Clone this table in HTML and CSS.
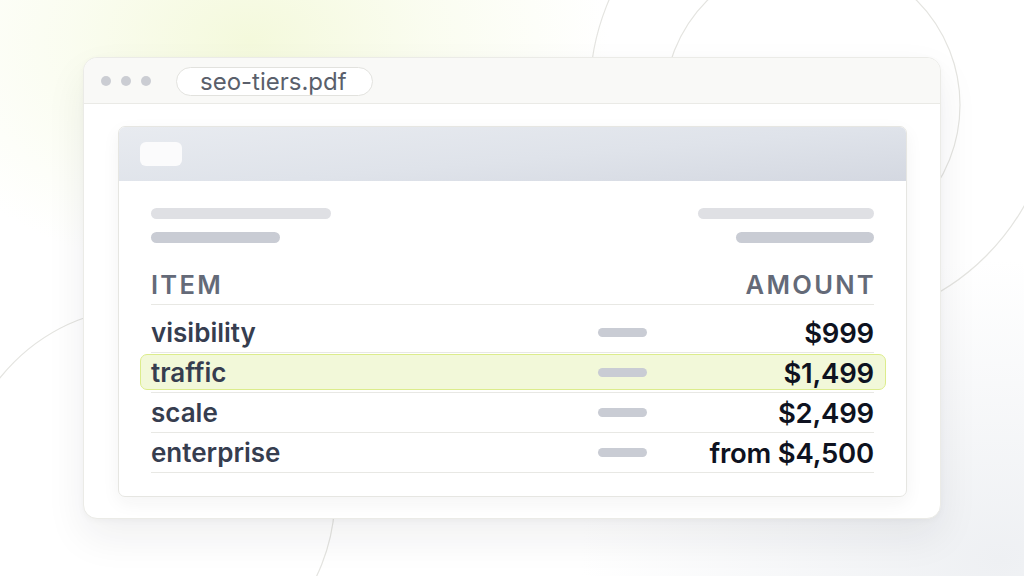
FILE: index.html
```html
<!DOCTYPE html>
<html lang="en">
<head>
    <meta charset="UTF-8">
    <meta name="viewport" content="width=device-width, initial-scale=1.0">
    <title>seo-tiers.pdf</title>
    <link rel="stylesheet" href="styles.css">
</head>
<body>

<div class="stage">
    <!-- decorative rings behind the window -->
    <svg class="rings" width="1024" height="576" viewBox="0 0 1024 576" aria-hidden="true">
        <circle cx="822" cy="92" r="232" />
        <circle cx="812" cy="105" r="148" />
        <circle cx="147" cy="495" r="188" />
    </svg>

    <div class="window">
        <!-- Title bar -->
        <div class="titlebar">
            <div class="dots">
                <span class="dot"></span>
                <span class="dot"></span>
                <span class="dot"></span>
            </div>
            <div class="tab">seo-tiers.pdf</div>
        </div>

        <!-- Document -->
        <div class="viewer">
            <div class="doc">
                <div class="doc-header">
                    <span class="doc-logo"></span>
                </div>

                <div class="doc-body">
                    <div class="meta">
                        <div class="meta-col">
                            <span class="bar bar-light" style="width: 180px"></span>
                            <span class="bar" style="width: 129px"></span>
                        </div>
                        <div class="meta-col meta-right">
                            <span class="bar bar-light" style="width: 176px"></span>
                            <span class="bar" style="width: 138px"></span>
                        </div>
                    </div>

                    <div class="table">
                        <div class="table-head">
                            <span>ITEM</span>
                            <span>AMOUNT</span>
                        </div>
                        <div class="row">
                            <span class="label">visibility</span>
                            <span class="dash"></span>
                            <span class="amount">$999</span>
                        </div>
                        <div class="row row-active">
                            <span class="label">traffic</span>
                            <span class="dash"></span>
                            <span class="amount">$1,499</span>
                        </div>
                        <div class="row">
                            <span class="label">scale</span>
                            <span class="dash"></span>
                            <span class="amount">$2,499</span>
                        </div>
                        <div class="row">
                            <span class="label">enterprise</span>
                            <span class="dash"></span>
                            <span class="amount">from $4,500</span>
                        </div>
                    </div>
                </div>
            </div>
        </div>
    </div>
</div>

</body>
</html>
```

FILE: styles.css
```css
body {
    margin: 0;
    font-family: Inter, "Noto Sans", Arial, sans-serif;
    background: #ffffff;
}

.stage {
    position: relative;
    width: 1024px;
    height: 576px;
    overflow: hidden;
    background:
        radial-gradient(ellipse 360px 240px at 250px 40px, #f4f9dc 0%, rgba(247, 251, 230, 0.6) 50%, rgba(255, 255, 255, 0) 100%),
        radial-gradient(ellipse 420px 300px at 1000px 560px, #eef0f3 0%, rgba(255, 255, 255, 0) 100%),
        #ffffff;
    padding: 57px 0 0 83px;
    box-sizing: border-box;
}

.rings {
    position: absolute;
    left: 0;
    top: 0;
    fill: none;
    stroke: #e4e4e0;
    stroke-width: 1.2;
}

.window {
    position: relative; /* sit above the rings */
    width: 858px;
    height: 462px;
    box-sizing: border-box;
    display: flex;
    flex-direction: column;
    background: #ffffff;
    border: 1px solid #ebebe7;
    border-radius: 14px;
    overflow: hidden;
    box-shadow: 0 18px 40px rgba(30, 35, 45, 0.07), 0 2px 6px rgba(30, 35, 45, 0.03);
}

/* Title bar */
.titlebar {
    height: 46px;
    flex-shrink: 0;
    box-sizing: border-box;
    display: flex;
    align-items: center;
    padding: 0 0 0 17px;
    background: #f9f9f7;
    border-bottom: 1px solid #eaeae6;
}

.dots {
    display: flex;
    gap: 10px;
    margin-right: 25px;
}

.dot {
    width: 10px;
    height: 10px;
    border-radius: 50%;
    background: #cbcdd3;
}

.tab {
    height: 29px;
    box-sizing: border-box;
    padding: 0 25px 0 23px;
    display: flex;
    align-items: center;
    background: #ffffff;
    border: 1px solid #e2e2de;
    border-radius: 15px;
    font-size: 24px;
    color: #5a5f6b;
    margin-top: 1px;
}

/* Viewer */
.viewer {
    flex: 1;
    padding: 22px 33px 22px 34px;
}

.doc {
    height: 371px;
    box-sizing: border-box;
    border: 1px solid #e6e6e2;
    border-radius: 7px;
    overflow: hidden;
    background: #ffffff;
    box-shadow: 0 6px 18px rgba(30, 35, 45, 0.05);
}

.doc-header {
    height: 54px;
    display: flex;
    align-items: center;
    padding-left: 21px;
    background: linear-gradient(175deg, #e8ebf0 0%, #dfe3ea 55%, #d4d8e1 100%);
}

.doc-logo {
    width: 42px;
    height: 24px;
    border-radius: 6px;
    background: #fbfbfc;
}

.doc-body {
    padding: 27px 32px 0 32px;
}

.meta {
    display: flex;
    justify-content: space-between;
}

.meta-col {
    display: flex;
    flex-direction: column;
    gap: 13px;
}

.meta-right {
    align-items: flex-end;
}

.bar {
    height: 11px;
    border-radius: 6px;
    background: #c9ccd4;
}

.bar-light {
    background: #dfe0e4;
}

/* Table */
.table {
    margin-top: 19px;
}

.table-head {
    display: flex;
    justify-content: space-between;
    height: 43px;
    box-sizing: border-box;
    padding-top: 8px;
    border-bottom: 1px solid #e8e8e4;
    font-size: 25.5px;
    font-weight: 600;
    letter-spacing: 2.3px;
    line-height: 30px;
    color: #646a78;
}

.table-head span:last-child {
    margin-right: -2px;
}

.row {
    position: relative;
    display: grid;
    grid-template-columns: 447px 49px 1fr;
    align-items: center;
    height: 40px;
    box-sizing: border-box;
    border-bottom: 1px solid #e8e8e4;
}

.table-head + .row {
    height: 48px;
    padding-top: 8px;
}

.row-active::before {
    content: "";
    position: absolute;
    left: -11px;
    right: -12px;
    top: 1px;
    bottom: 2px;
    background: #f2f8d9;
    border: 1.5px solid #dcec8c;
    border-radius: 7px;
}

.label,
.dash,
.amount {
    position: relative;
}

.label {
    font-size: 26px;
    font-weight: 600;
    color: #363d4f;
}

.dash {
    height: 9px;
    border-radius: 5px;
    background: #c9ccd4;
}

.amount {
    text-align: right;
    font-size: 27.5px;
    font-weight: 600;
    letter-spacing: -0.2px;
    color: #0e1220;
}
```
